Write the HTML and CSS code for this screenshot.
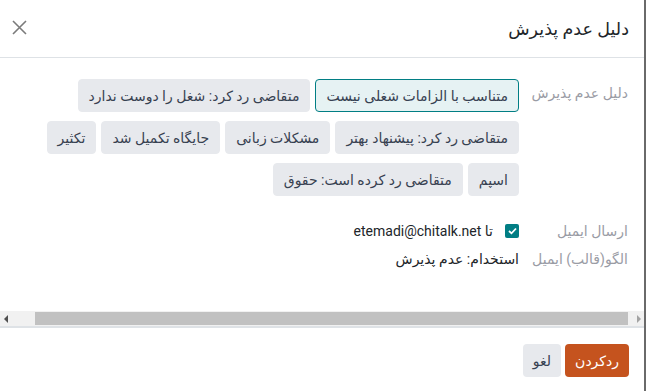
FILE: index.html
```html
<!DOCTYPE html>
<html lang="fa" dir="rtl">
<head>
    <meta charset="UTF-8">
    <meta name="viewport" content="width=device-width, initial-scale=1.0">
    <title>دلیل عدم پذیرش</title>
    <link rel="stylesheet" href="styles.css">
</head>
<body>
    <div class="modal">
        <!-- Header -->
        <div class="modal-header">
            <div class="modal-title">دلیل عدم پذیرش</div>
            <button class="close-btn" aria-label="بستن">
                <svg width="15" height="15" viewBox="0 0 15 15">
                    <path d="M1 1 L14 14 M14 1 L1 14" stroke="#7b7b7b" stroke-width="1.6" fill="none"/>
                </svg>
            </button>
        </div>

        <!-- Body -->
        <div class="modal-body">
            <div class="field-row">
                <div class="field-label">دلیل عدم پذیرش</div>
                <div class="tags">
                    <span class="tag selected">متناسب با الزامات شغلی نیست</span>
                    <span class="tag">متقاضی رد کرد: شغل را دوست ندارد</span>
                    <span class="tag">متقاضی رد کرد: پیشنهاد بهتر</span>
                    <span class="tag">مشکلات زبانی</span>
                    <span class="tag">جایگاه تکمیل شد</span>
                    <span class="tag">تکثیر</span>
                    <span class="tag">اسپم</span>
                    <span class="tag">متقاضی رد کرده است: حقوق</span>
                </div>
            </div>

            <div class="field-row email-row">
                <div class="field-label">ارسال ایمیل</div>
                <div class="field-value">
                    <span class="checkbox">
                        <svg width="9" height="8" viewBox="0 0 9 8">
                            <path d="M1 4 L3.5 6.3 L8 1.5" stroke="#fff" stroke-width="1.8" fill="none"/>
                        </svg>
                    </span>
                    <span>تا <span class="email" dir="ltr">etemadi@chitalk.net</span></span>
                </div>
            </div>

            <div class="field-row template-row">
                <div class="field-label">الگو(قالب) ایمیل</div>
                <div class="field-value">استخدام: عدم پذیرش</div>
            </div>
        </div>

        <!-- Horizontal scrollbar -->
        <div class="hscroll" dir="ltr">
            <span class="arrow arrow-left"></span>
            <div class="thumb"></div>
            <span class="arrow arrow-right"></span>
        </div>

        <!-- Footer -->
        <div class="modal-footer">
            <button class="btn btn-primary">ردکردن</button>
            <button class="btn btn-secondary">لغو</button>
        </div>
    </div>
</body>
</html>
```

FILE: styles.css
```css
* {
    margin: 0;
    padding: 0;
    box-sizing: border-box;
}
body {
    background-color: #fff;
    font-family: Roboto, "DejaVu Sans", sans-serif;
    color: #212529;
}
.modal {
    width: 646px;
    height: 391px;
    border-right: 2px solid #6a6a6a;
    display: flex;
    flex-direction: column;
}
.modal-header {
    height: 58px;
    display: flex;
    justify-content: space-between;
    align-items: center;
    padding: 0 15px 0 12px;
    border-bottom: 1px solid #dee2e6;
}
.modal-title {
    font-size: 17.5px;
    color: #212529;
}
.close-btn {
    background: none;
    border: none;
    width: 15px;
    height: 15px;
    display: flex;
    margin-top: -2px;
}
.modal-body {
    padding: 21px 16px 0 16px;
    flex: 1;
}
.field-row {
    display: grid;
    grid-template-columns: 109px 1fr;
    align-items: start;
}
.field-label {
    color: #9a9ca5;
    font-size: 14px;
    padding-top: 6px;
}
.tags {
    display: flex;
    flex-wrap: wrap;
    gap: 9px 5px;
    max-width: 484px;
}
.tag {
    display: inline-flex;
    align-items: center;
    height: 33px;
    padding: 0 10px;
    background-color: #e7e9ed;
    border: 1px solid #e7e9ed;
    border-radius: 4px;
    font-size: 14px;
    color: #374151;
}
.tag.selected {
    background-color: #e6f2f3;
    border-color: #017e84;
}
.email-row {
    margin-top: 24px;
}
.template-row {
    margin-top: 6px;
}
.email-row .field-label,
.template-row .field-label {
    padding-top: 0;
    line-height: 22px;
}
.field-value {
    display: flex;
    align-items: center;
    gap: 12px;
    font-size: 14px;
    line-height: 22px;
    color: #212529;
}
.checkbox {
    width: 14px;
    height: 14px;
    background-color: #017e84;
    border-radius: 2px;
    display: inline-flex;
    align-items: center;
    justify-content: center;
}
.email {
    font-family: Roboto, sans-serif;
}
.hscroll {
    height: 17px;
    background-color: #f1f1f1;
    border-bottom: 2px solid #dee2e6;
    display: flex;
    align-items: center;
}
.thumb {
    margin-left: 27px;
    width: 593px;
    height: 13px;
    background-color: #c1c1c1;
}
.arrow {
    width: 0;
    height: 0;
    border-top: 4px solid transparent;
    border-bottom: 4px solid transparent;
}
.arrow-left {
    margin-left: 4px;
    border-right: 4px solid #505050;
}
.arrow-right {
    margin-left: 9px;
    border-left: 4px solid #a3a3a3;
}
.modal-footer {
    height: 63px;
    display: flex;
    align-items: flex-start;
    gap: 4px;
    padding: 16px 15px 0 15px;
}
.btn {
    height: 33px;
    padding: 0 10px;
    border: none;
    border-radius: 4px;
    font-family: Roboto, "DejaVu Sans", sans-serif;
    font-size: 14px;
}
.btn-primary {
    background-color: #c5531e;
    color: #fff;
}
.btn-secondary {
    background-color: #e7e9ed;
    color: #374151;
}
```
